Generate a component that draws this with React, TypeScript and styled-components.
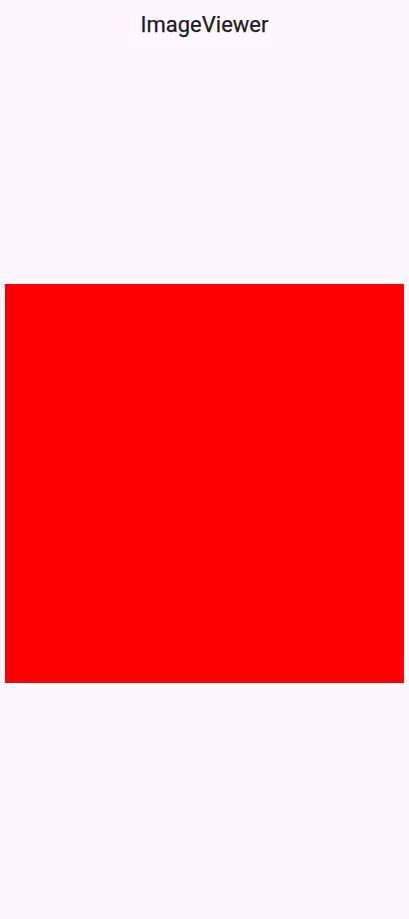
import React from "react";
import styled, { createGlobalStyle } from "styled-components";

const GlobalStyle = createGlobalStyle`
  html, body {
    margin: 0;
    padding: 0;
    background-color: #fef7ff;
  }
  body {
    font-family: Roboto, "Noto Sans", sans-serif;
  }
`;

const Screen = styled.div`
  width: 409px;
  height: 919px;
  display: flex;
  flex-direction: column;
  background-color: #fef7ff;
`;

const TopBar = styled.header`
  height: 48px;
  display: flex;
  align-items: center;
  justify-content: center;
  font-size: 22px;
  font-weight: 400;
  color: #1d1b20;
  -webkit-text-stroke: 0.25px #1d1b20;
`;

const Viewer = styled.main`
  flex: 1;
  display: flex;
  align-items: center;
  justify-content: center;
`;

const Picture = styled.div<{ $color: string }>`
  width: 399px;
  height: 399px;
  background-color: ${(p) => p.$color};
`;

const App = () => {
  return (
    <>
      <GlobalStyle />
      <Screen>
        <TopBar>ImageViewer</TopBar>
        <Viewer>
          <Picture $color="#ff0000" />
        </Viewer>
      </Screen>
    </>
  );
};

export default App;
